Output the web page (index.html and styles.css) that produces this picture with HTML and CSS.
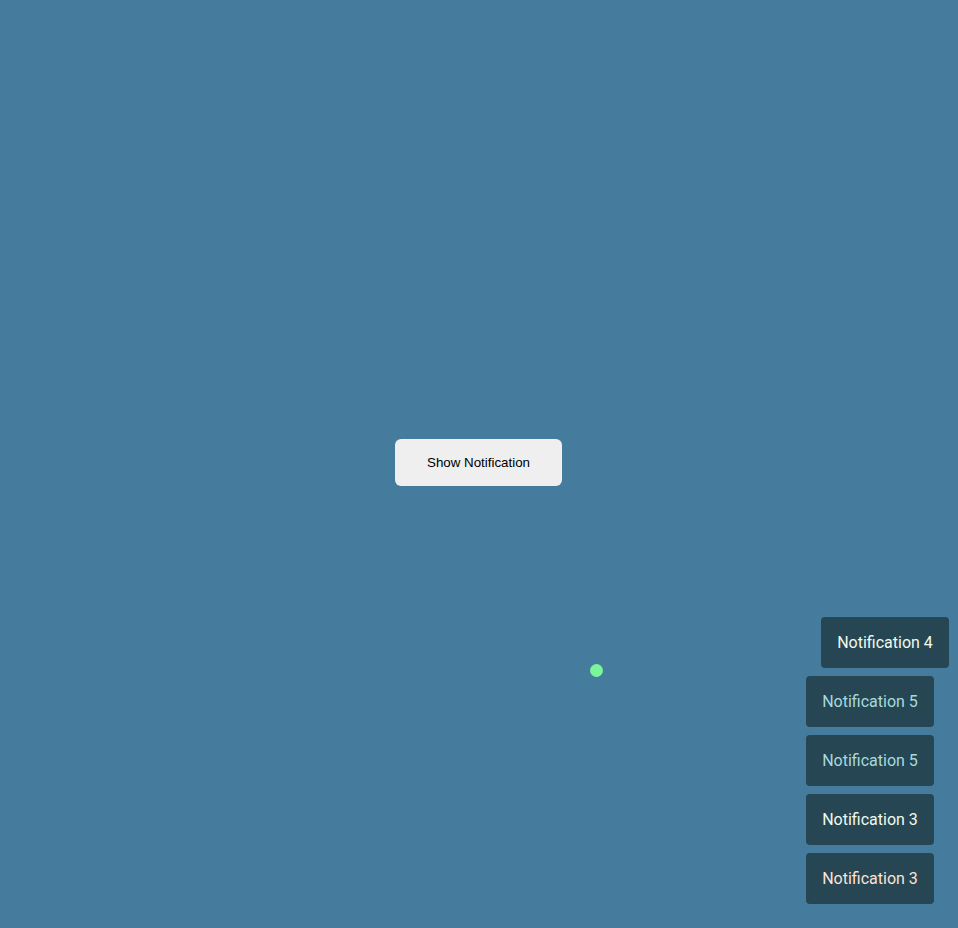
FILE: index.html
```html
<!DOCTYPE html>
<html>
<head>
<meta charset="utf-8">
<link rel="stylesheet" href="styles.css">
</head>
<body>
<main class="stage">
  <button class="show-btn">Show Notification</button>
</main>
<span class="dot"></span>
<div class="toasts">
  <div class="toast toast-in c-white">Notification 4</div>
  <div class="toast c-blue">Notification 5</div>
  <div class="toast c-blue">Notification 5</div>
  <div class="toast c-white">Notification 3</div>
  <div class="toast c-peach">Notification 3</div>
</div>
</body>
</html>
```
FILE: styles.css
```css
html, body {
  margin: 0;
  padding: 0;
  height: 100%;
}
body {
  background: #457b9d;
  font-family: Roboto, "Liberation Sans", Arial, sans-serif;
  overflow: hidden;
}
.stage {
  height: 100vh;
  display: flex;
  align-items: center;
  justify-content: center;
}
.show-btn {
  width: 167px;
  height: 47px;
  margin-top: -3px;
  margin-left: -1px;
  background: #efefef;
  border: none;
  border-radius: 6px;
  font-family: "Liberation Sans", Arial, sans-serif;
  font-size: 13.33px;
  color: #000;
  cursor: pointer;
}
.dot {
  position: absolute;
  left: 590px;
  top: 664px;
  width: 13px;
  height: 13px;
  border-radius: 50%;
  background: #7af59c;
}
.toasts {
  position: absolute;
  right: 24px;
  bottom: 24px;
  display: flex;
  flex-direction: column;
  align-items: flex-end;
  gap: 8px;
}
.toast {
  width: 128px;
  height: 51px;
  box-sizing: border-box;
  background: #264653;
  border-radius: 4px;
  font-size: 16px;
  display: flex;
  align-items: center;
  justify-content: center;
}
.toast-in {
  transform: translateX(15px);
}
.c-white { color: #f1faee; }
.c-blue { color: #a8dadc; }
.c-peach { color: #fde2d6; }
```
